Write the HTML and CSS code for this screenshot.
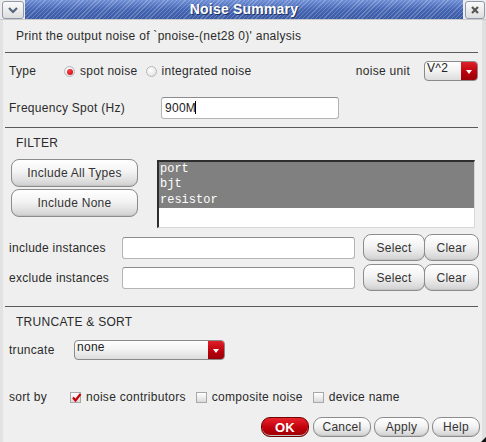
FILE: index.html
```html
<!DOCTYPE html>
<html>
<head>
<meta charset="utf-8">
<link rel="stylesheet" href="styles.css">
</head>
<body>
<div class="window">
  <div class="titlebar">
    <div class="tb-btn tb-left">
      <svg width="12" height="8" viewBox="0 0 12 8"><path d="M2 2 L6 6 L10 2" fill="none" stroke="#55657a" stroke-width="2.2"/></svg>
    </div>
    <div class="tb-title">Noise Summary</div>
    <div class="tb-btn tb-right">
      <svg width="10" height="10" viewBox="0 0 10 10"><path d="M2 2 L8 8 M8 2 L2 8" fill="none" stroke="#555" stroke-width="2.2"/></svg>
    </div>
  </div>
  <div class="frame">
    <div class="edge-left"></div>
    <div class="content">
      <div class="desc">Print the output noise of `pnoise-(net28 0)' analysis</div>
      <div class="sep"></div>
      <div class="row type-row">
        <span class="lbl type-lbl">Type</span>
        <span class="radio on"></span><span class="opt">spot noise</span>
        <span class="radio"></span><span class="opt">integrated noise</span>
        <span class="lbl unit-lbl">noise unit</span>
        <div class="combo unit-combo"><span class="combo-text">V^2</span><span class="combo-arrow"></span></div>
      </div>
      <div class="row freq-row">
        <span class="lbl freq-lbl">Frequency Spot (Hz)</span>
        <div class="field freq-field">900M<span class="caret"></span></div>
      </div>
      <div class="sep sep2"></div>
      <div class="section-title">FILTER</div>
      <div class="filter">
        <div class="filter-btns">
          <div class="btn big">Include All Types</div>
          <div class="btn big">Include None</div>
        </div>
        <div class="listbox">
          <div class="item sel">port</div>
          <div class="item sel">bjt</div>
          <div class="item sel">resistor</div>
        </div>
      </div>
      <div class="row inst-row first">
        <span class="lbl inst-lbl">include instances</span>
        <div class="field inst-field"></div>
        <div class="btn sel-btn">Select</div>
        <div class="btn clr-btn">Clear</div>
      </div>
      <div class="row inst-row">
        <span class="lbl inst-lbl">exclude instances</span>
        <div class="field inst-field"></div>
        <div class="btn sel-btn">Select</div>
        <div class="btn clr-btn">Clear</div>
      </div>
      <div class="sep sep3"></div>
      <div class="section-title">TRUNCATE &amp; SORT</div>
      <div class="row trunc-row">
        <span class="lbl trunc-lbl">truncate</span>
        <div class="combo trunc-combo"><span class="combo-text">none</span><span class="combo-arrow"></span></div>
      </div>
      <div class="row sort-row">
        <span class="lbl sort-lbl">sort by</span>
        <span class="check on"><svg width="11" height="11" viewBox="0 0 11 11"><path d="M2 5.5 L4.5 8.5 L9.5 2" fill="none" stroke="#c8000a" stroke-width="2.2"/></svg></span><span class="opt c1">noise contributors</span>
        <span class="check"></span><span class="opt c2">composite noise</span>
        <span class="check"></span><span class="opt">device name</span>
      </div>
      <div class="row actions">
        <div class="btn ok">OK</div>
        <div class="btn act cancel">Cancel</div>
        <div class="btn act apply">Apply</div>
        <div class="btn act help">Help</div>
      </div>
    </div>
    <div class="edge-right"><span class="grip"></span></div>
  </div>
</div>
</body>
</html>
```

FILE: styles.css
```css
* { box-sizing: border-box; }
html, body { margin: 0; padding: 0; }
body {
  width: 486px;
  height: 442px;
  overflow: hidden;
  font-family: "Liberation Sans", Arial, sans-serif;
  font-size: 12px;
  letter-spacing: 0.28px;
  color: #2b2b2b;
  background: #efefef;
}
.window {
  width: 486px;
  height: 442px;
  display: flex;
  flex-direction: column;
}
.titlebar {
  height: 20px;
  display: flex;
  align-items: stretch;
  background: #e6e6e6;
  border-bottom: 1px solid #c9c9c9;
}
.tb-btn {
  width: 25px;
  display: flex;
  align-items: center;
  justify-content: center;
  background: #ececec;
}
.tb-btn svg {
  box-sizing: content-box;
  padding: 3px 4px;
  border: 1px solid #8e99ab;
  border-radius: 3px;
  background: linear-gradient(#fafafa, #dedede);
}
.tb-left svg { padding: 4px 4px; }
.tb-right { width: 23px; }
.tb-right svg { padding: 3px 4px; }
.tb-title {
  flex: 1;
  text-align: center;
  font-weight: bold;
  font-size: 14px;
  letter-spacing: 0.2px;
  line-height: 19px;
  color: #fff;
  text-shadow: 1px 1px 0 #20325e;
  background:
    repeating-linear-gradient(135deg, rgba(255,255,255,0) 0 2px, rgba(255,255,255,0.22) 2px 3px),
    linear-gradient(#6f8fd6, #4566b4 50%, #3a5aa6);
}
.frame {
  flex: 1;
  display: flex;
}
.edge-left {
  width: 3px;
  background: #e2e2e2;
}
.edge-right {
  width: 4px;
  background: #e0e0e0;
  position: relative;
}
.grip {
  position: absolute;
  right: 0;
  bottom: 0;
  width: 0;
  height: 0;
  border-left: 5px solid transparent;
  border-bottom: 5px solid #111;
}
.content {
  flex: 1;
  display: flex;
  flex-direction: column;
}
.desc {
  height: 32px;
  line-height: 32px;
  padding-left: 13px;
}
.sep {
  height: 1px;
  background: #5a5a5a;
  margin-left: 2px;
  margin-right: 4px;
}
.row {
  display: flex;
  align-items: center;
}
.lbl { white-space: nowrap; }
.type-row { margin-top: 8px; height: 20px; }
.type-lbl { width: 61px; padding-left: 6px; }
.radio {
  width: 11px;
  height: 11px;
  border-radius: 50%;
  border: 1px solid #b8b8b8;
  background: radial-gradient(circle at 40% 35%, #ffffff, #dcdcdc);
  display: inline-flex;
  align-items: center;
  justify-content: center;
  margin-top: 1px;
}
.radio.on::after {
  content: "";
  width: 6px;
  height: 6px;
  border-radius: 50%;
  background: radial-gradient(circle at 40% 35%, #ff4040, #c00010);
}
.opt { margin-left: 5px; white-space: nowrap; }
.type-row .radio + .opt { margin-right: 8px; }
.unit-lbl { margin-left: auto; margin-right: 14px; }
.combo {
  display: flex;
  height: 20px;
  border: 1px solid #8a8a8a;
  border-radius: 4px;
  overflow: hidden;
  background: linear-gradient(#ffffff, #f2f2f2 50%, #dcdcdc);
}
.combo-text {
  flex: 1;
  padding-left: 2px;
  line-height: 13px;
  color: #222;
}
.combo-arrow {
  width: 16px;
  background: linear-gradient(#e0202a, #b8000a 60%, #9a0008);
  position: relative;
}
.combo-arrow::after {
  content: "";
  position: absolute;
  left: 5px;
  top: 8px;
  border-left: 3px solid transparent;
  border-right: 3px solid transparent;
  border-top: 4px solid #fff;
}
.unit-combo { width: 54px; margin-right: 4px; }
.freq-row { margin-top: 16px; height: 22px; }
.freq-lbl { width: 158px; padding-left: 6px; }
.field {
  height: 22px;
  background: #fff;
  border: 1px solid #b4b4b4;
  border-top-color: #8c8c8c;
  border-radius: 3px;
  padding-left: 3px;
  line-height: 20px;
  color: #222;
}
.caret {
  display: inline-block;
  width: 1px;
  height: 13px;
  background: #000;
  vertical-align: -2px;
  margin-left: -1px;
}
.freq-field { width: 178px; }
.sep2 { margin-top: 8px; }
.section-title {
  height: 28px;
  line-height: 30px;
  padding-left: 13px;
}
.filter {
  margin-top: 3px;
  height: 69px;
  display: flex;
}
.filter-btns {
  display: flex;
  flex-direction: column;
  gap: 2px;
  padding-left: 8px;
  width: 154px;
}
.btn {
  display: flex;
  align-items: center;
  justify-content: center;
  border: 1px solid #8c8c8c;
  border-radius: 8px;
  background: linear-gradient(#ffffff, #f3f3f3 45%, #dedede 80%, #cfcfcf);
  box-shadow: inset 0 -1px 0 #c4c4c4;
  color: #333;
  white-space: nowrap;
}
.btn.big { width: 127px; height: 28px; }
.listbox {
  margin-top: 1px;
  width: 318px;
  height: 68px;
  background: #fff;
  border-top: 2px solid #2e2e2e;
  border-left: 2px solid #2e2e2e;
  border-right: 1px solid #d8d8d8;
  border-bottom: 1px solid #d8d8d8;
  font-family: "Liberation Mono", "Courier New", monospace;
  font-size: 12px;
  letter-spacing: 0;
}
.item {
  height: 15.4px;
  line-height: 15px;
  padding-left: 1px;
}
.item.sel { background: #808080; color: #fff; }
.inst-row { margin-top: 3px; height: 27px; }
.inst-row.first { margin-top: 6px; }
.inst-lbl { width: 119px; padding-left: 6px; }
.inst-field { width: 233px; }
.sel-btn { margin-left: 8px; width: 62px; height: 27px; }
.clr-btn { width: 55px; height: 27px; margin-left: -1px; }
.sep3 { margin-top: 15px; }
.trunc-row { margin-top: 5px; height: 20px; }
.trunc-lbl { width: 71px; padding-left: 6px; }
.trunc-combo { width: 151px; }
.sort-row { margin-top: 27px; height: 20px; }
.sort-lbl { width: 67px; padding-left: 6px; }
.check {
  width: 11px;
  height: 11px;
  border: 1px solid #a8a8a8;
  background: linear-gradient(#ffffff, #dadada);
  display: inline-flex;
  position: relative;
}
.check svg { position: absolute; left: 0; top: -1px; }
.sort-row .opt { margin-left: 5px; }
.c1 { margin-right: 10px; }
.c2 { margin-right: 10px; }
.actions {
  margin-top: 10px;
  height: 20px;
  justify-content: flex-end;
  gap: 3px;
  padding-right: 2px;
}
.actions .btn { height: 20px; border-radius: 9px; }
.ok {
  width: 48px;
  background: linear-gradient(#e8242c, #c0000a 55%, #9c0006);
  border-color: #6e0000;
  color: #fff;
  font-weight: bold;
  font-size: 13px;
  margin-right: 1px;
}
.cancel { width: 58px; }
.apply { width: 55px; }
.help { width: 48px; }
```
